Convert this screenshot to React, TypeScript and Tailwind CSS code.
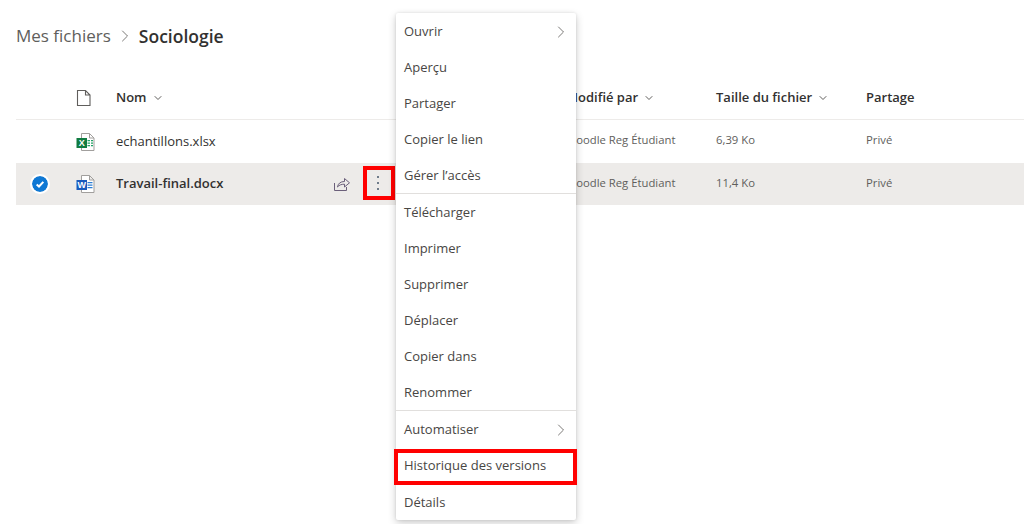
import { ChevronDown, ChevronRight } from "lucide-react";

const FONT = "font-['Open_Sans','Noto_Sans',sans-serif]";

const MENU_GROUPS = [
  [
    { label: "Ouvrir", sub: true },
    { label: "Aperçu" },
    { label: "Partager" },
    { label: "Copier le lien" },
    { label: "Gérer l’accès" },
  ],
  [
    { label: "Télécharger" },
    { label: "Imprimer" },
    { label: "Supprimer" },
    { label: "Déplacer" },
    { label: "Copier dans" },
    { label: "Renommer" },
  ],
  [
    { label: "Automatiser", sub: true },
    { label: "Historique des versions" },
    { label: "Détails", last: true },
  ],
];

function BlankFile() {
  return (
    <svg width="16" height="18" viewBox="0 0 16 18" fill="none">
      <path d="M1.500 1.500h8l4.500 4.500v10.500h-12.500z M9.500 1.500v4.500h4.500" stroke="#605e5c" strokeWidth="1.1" />
    </svg>
  );
}

function OfficeFile({ kind }: { kind: "xlsx" | "docx" }) {
  const color = kind === "xlsx" ? "#107c41" : "#185abd";
  const lines = kind === "xlsx" ? "#21a366" : "#2b7cd3";
  return (
    <svg width="20" height="20" viewBox="0 0 20 20" fill="none">
      <path d="M5.500 1.500h8l4.500 4.500v12.500h-12.500z M13.500 1.500v4.500h4.500" fill="#fff" stroke="#a19f9d" />
      {kind === "xlsx" ? (
        <path d="M11.500 8h2.500v1.200h-2.500z M15 8h2v1.200h-2z M11.500 10.500h2.500v1.200h-2.500z M15 10.500h2v1.200h-2z M11.500 13h2.500v1.200h-2.500z M15 13h2v1.200h-2z" fill={lines} />
      ) : (
        <path d="M11.500 8h5v1.200h-5z M11.500 10.500h5v1.200h-5z M11.500 13h5v1.200h-5z" fill={lines} />
      )}
      <rect x="0.500" y="6" width="10.500" height="10" fill={color} />
      <text x="5.700" y="14.300" textAnchor="middle" fontSize="9" fontWeight="700" fill="#fff" fontFamily="Liberation Sans, sans-serif">
        {kind === "xlsx" ? "X" : "W"}
      </text>
    </svg>
  );
}

function ShareIcon() {
  return (
    <svg width="18" height="16" viewBox="0 0 18 16" fill="none" stroke="#6b5f7a" strokeWidth="1">
      <path d="M1.500 7v7.500h12V11" />
      <path d="M4.500 11c.5-3.500 3-5.500 7-5.500V2.500l5 4.300-5 4.200V8.200c-3 0-5.500.8-7 2.800z" />
    </svg>
  );
}

function CheckCircle() {
  return (
    <div className="flex h-[16px] w-[16px] items-center justify-center rounded-full bg-[#0f78d4] outline-2 outline-white">
      <svg width="10" height="10" viewBox="0 0 12 12" fill="none" stroke="#fff" strokeWidth="2.400">
        <path d="M2 6.500l2.800 2.500L10 3.500" />
      </svg>
    </div>
  );
}

function FileRow({
  name,
  kind,
  size,
  selected,
}: {
  name: string;
  kind: "xlsx" | "docx";
  size: string;
  selected?: boolean;
}) {
  return (
    <div className={`flex items-center ${selected ? "h-[42px] bg-[#edebe9]" : "h-[43px]"}`}>
      <div className="flex w-[48px] justify-center">{selected && <CheckCircle />}</div>
      <div className="flex w-[52px] pl-[12px]">
        <OfficeFile kind={kind} />
      </div>
      <div className={`w-[217px] shrink-0 text-[13px] text-[#323130] ${selected ? "font-semibold" : ""}`}>{name}</div>
      <div className="flex w-[233px] shrink-0 items-center">{selected && <ShareIcon />}</div>
      <div className="w-[150px] shrink-0 pb-[2px] text-[11.300px] text-[#605e5c]">Moodle Reg Étudiant</div>
      <div className="w-[150px] shrink-0 pb-[2px] text-[11.300px] text-[#605e5c]">{size}</div>
      <div className="pb-[2px] text-[11.300px] text-[#605e5c]">Privé</div>
    </div>
  );
}

export default function App() {
  return (
    <div className={`relative h-[524px] w-[1029px] overflow-hidden bg-white pr-[5px] pl-4 ${FONT}`}>
      {/* Breadcrumb */}
      <div className="flex h-[75px] items-start pt-[23px]">
        <span className="text-[17px] leading-[26px] text-[#605e5c]">Mes fichiers</span>
        <ChevronRight size={20} strokeWidth={1} className="mx-[4px] mt-[3px] text-[#605e5c]" />
        <span className="text-[17.500px] leading-[26px] font-semibold text-[#323130]">Sociologie</span>
      </div>

      {/* Header */}
      <div className="flex h-[45px] items-center border-b border-[#edebe9] pt-[2px] text-[13px] font-semibold text-[#323130]">
        <div className="w-[48px]" />
        <div className="flex w-[52px] pl-[12px]">
          <BlankFile />
        </div>
        <div className="flex w-[450px] items-center gap-[5px]">
          Nom <ChevronDown size={12} className="text-[#605e5c]" />
        </div>
        <div className="flex w-[150px] items-center gap-[5px]">
          Modifié par <ChevronDown size={12} className="text-[#605e5c]" />
        </div>
        <div className="flex w-[150px] items-center gap-[5px]">
          Taille du fichier <ChevronDown size={12} className="text-[#605e5c]" />
        </div>
        <div>Partage</div>
      </div>

      <FileRow name="echantillons.xlsx" kind="xlsx" size="6,39 Ko" />
      <FileRow name="Travail-final.docx" kind="docx" size="11,4 Ko" selected />

      {/* Kebab with annotation */}
      <div className="absolute top-[166px] left-[363px] flex h-[34px] w-[32px] flex-col items-center justify-center gap-[4px] border-4 border-[#ff0000] pr-[2px]">
        <span className="h-[2px] w-[2px] bg-[#6f7c8a]" />
        <span className="h-[2px] w-[2px] bg-[#6f7c8a]" />
        <span className="h-[2px] w-[2px] bg-[#6f7c8a]" />
      </div>

      {/* Context menu */}
      <div className="absolute top-[13px] left-[396px] w-[180px] rounded-[2px] bg-white shadow-[0_3px_8px_rgba(0,0,0,0.2),0_0_3px_rgba(0,0,0,0.1)]">
        {MENU_GROUPS.map((group, i) => (
          <div key={i} className={i > 0 ? "border-t border-[#e1dfdd]" : ""}>
            {group.map((item) => (
              <div
                key={item.label}
                className={`flex items-center justify-between pt-[2px] pr-[5px] pl-[8px] text-[13px] text-[#484644] ${item.last ? "h-[37px]" : "h-[36px]"}`}
              >
                <span>{item.label}</span>
                {item.sub && <ChevronRight size={20} strokeWidth={1} className="text-[#605e5c]" />}
              </div>
            ))}
          </div>
        ))}
      </div>

      {/* Annotation on the menu item */}
      <div className="absolute top-[449px] left-[394px] h-[36px] w-[183px] border-4 border-[#ff0000]" />
    </div>
  );
}
